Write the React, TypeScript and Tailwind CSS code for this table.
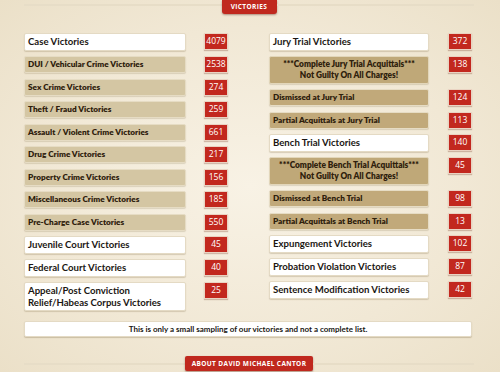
import React from "react";

type Row = {
  label: string;
  sub?: string;
  count: number;
  kind: "head" | "tan" | "dark" | "block";
};

const left: Row[] = [
  { label: "Case Victories", count: 4079, kind: "head" },
  { label: "DUI / Vehicular Crime Victories", count: 2538, kind: "tan" },
  { label: "Sex Crime Victories", count: 274, kind: "tan" },
  { label: "Theft / Fraud Victories", count: 259, kind: "tan" },
  { label: "Assault / Violent Crime Victories", count: 661, kind: "tan" },
  { label: "Drug Crime Victories", count: 217, kind: "tan" },
  { label: "Property Crime Victories", count: 156, kind: "tan" },
  { label: "Miscellaneous Crime Victories", count: 185, kind: "tan" },
  { label: "Pre-Charge Case Victories", count: 550, kind: "tan" },
  { label: "Juvenile Court Victories", count: 45, kind: "head" },
  { label: "Federal Court Victories", count: 40, kind: "head" },
  { label: "Appeal/Post Conviction", sub: "Relief/Habeas Corpus Victories", count: 25, kind: "head" },
];

const right: Row[] = [
  { label: "Jury Trial Victories", count: 372, kind: "head" },
  { label: "***Complete Jury Trial Acquittals***", sub: "Not Guilty On All Charges!", count: 138, kind: "block" },
  { label: "Dismissed at Jury Trial", count: 124, kind: "dark" },
  { label: "Partial Acquittals at Jury Trial", count: 113, kind: "dark" },
  { label: "Bench Trial Victories", count: 140, kind: "head" },
  { label: "***Complete Bench Trial Acquittals***", sub: "Not Guilty On All Charges!", count: 45, kind: "block" },
  { label: "Dismissed at Bench Trial", count: 98, kind: "dark" },
  { label: "Partial Acquittals at Bench Trial", count: 13, kind: "dark" },
  { label: "Expungement Victories", count: 102, kind: "head" },
  { label: "Probation Violation Victories", count: 87, kind: "head" },
  { label: "Sentence Modification Victories", count: 42, kind: "head" },
];

const lato = { fontFamily: 'Lato, "Open Sans", sans-serif' };

function Label({ row }: { row: Row }) {
  if (row.kind === "head") {
    return (
      <div
        className="flex-1 rounded-[2px] bg-white border border-[#e4dac4] shadow-[0_1px_1px_rgba(120,100,60,0.25)] pl-[3px] pr-1 py-[2px] text-[9.6px] leading-[11.5px] font-bold text-[#1a1612] flex flex-col justify-center"
        style={lato}
      >
        <span>{row.label}</span>
        {row.sub && <span>{row.sub}</span>}
      </div>
    );
  }
  if (row.kind === "block") {
    return (
      <div
        className="flex-1 h-[27.5px] rounded-[2px] bg-[#bfa878] border border-[#e2d6ba] shadow-[0_1px_1px_rgba(120,100,60,0.2)] flex flex-col items-center justify-center text-[8.3px] leading-[11px] font-extrabold text-[#2e200c]"
        style={lato}
      >
        <span>{row.label}</span>
        <span>{row.sub}</span>
      </div>
    );
  }
  const bg = row.kind === "tan" ? "bg-[#d4c6a3]" : "bg-[#c1a97a]";
  return (
    <div
      className={`flex-1 h-[17px] rounded-[2px] ${bg} border border-[#e6dcc4] shadow-[0_1px_1px_rgba(120,100,60,0.2)] pl-[3px] flex items-center text-[8.2px] font-extrabold text-[#2e200c]`}
      style={lato}
    >
      {row.label}
    </div>
  );
}

function Count({ n }: { n: number }) {
  return (
    <div className="w-[24px] h-[17px] bg-[#c2281e] border border-[#ead3c2] shadow-[0_1px_1px_rgba(120,60,40,0.3)] flex items-center justify-center text-[8.5px] text-white">
      {n}
    </div>
  );
}

function Column({ rows, gap }: { rows: Row[]; gap: string }) {
  return (
    <div className="flex flex-col gap-[5.5px]">
      {rows.map((r) => (
        <div key={r.label} className={`flex items-start ${gap}`}>
          <Label row={r} />
          <Count n={r.count} />
        </div>
      ))}
    </div>
  );
}

function RedTab({ children, className }: { children: React.ReactNode; className: string }) {
  return (
    <div
      className={`bg-[#c0281e] text-white font-bold uppercase tracking-[0.06em] text-[6.5px] flex items-center justify-center shadow-[0_1px_2px_rgba(90,30,20,0.45)] ${className}`}
    >
      {children}
    </div>
  );
}

export default function App() {
  return (
    <div
      className="w-[500px] h-[372px] overflow-hidden bg-[radial-gradient(ellipse_at_center,#f8f2e5_0%,#f1e8d5_60%,#ebe0c8_100%)] pl-[24px] pr-[28px]"
      style={{ fontFamily: '"Open Sans", "DejaVu Sans", sans-serif' }}
    >
      <div className="flex items-start -mr-[2px]">
        <div className="flex-1 h-[2px] mt-[4px] bg-[#e7ddc7]" />
        <RedTab className="w-[55px] h-[14px] rounded-b-[3px]">Victories</RedTab>
        <div className="flex-1 h-[2px] mt-[4px] bg-[#e7ddc7]" />
      </div>

      <div className="mt-[19px] grid grid-cols-[204px_203px] gap-x-[41px]">
        <Column rows={left} gap="gap-[18px]" />
        <Column rows={right} gap="gap-[19px]" />
      </div>

      <div
        className="mt-[10px] h-[16px] rounded-[2px] bg-white border border-[#e4dac4] shadow-[0_1px_1px_rgba(120,100,60,0.3)] flex items-center justify-center text-[8px] font-bold text-[#1a1612]"
        style={lato}
      >
        This is only a small sampling of our victories and not a complete list.
      </div>

      <div className="mt-[19px] flex items-center -mr-[2px]">
        <div className="flex-1 h-[2px] bg-[#e7ddc7]" />
        <RedTab className="w-[128px] h-[15px] rounded-[2px]">About David Michael Cantor</RedTab>
        <div className="flex-1 h-[2px] bg-[#e7ddc7]" />
      </div>
    </div>
  );
}
